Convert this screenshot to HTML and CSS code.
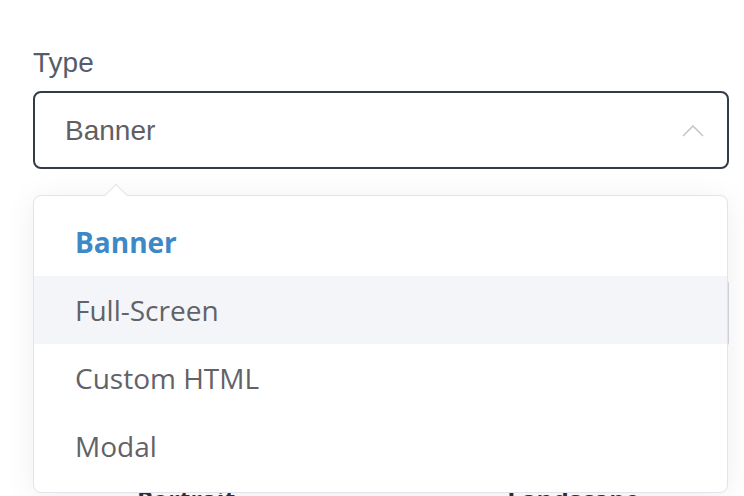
FILE: index.html
```html
<!DOCTYPE html>
<html>
<head>
<meta charset="utf-8">
<link rel="stylesheet" href="styles.css">
</head>
<body>
<div class="page">
  <div class="field">
    <div class="label">Type</div>
    <div class="select">
      <span class="value">Banner</span>
      <svg class="chevron" width="22" height="12" viewBox="0 0 22 12"><polyline points="1,11 11,1 21,11" fill="none" stroke="#c6c6cc" stroke-width="1.6"/></svg>
    </div>
  </div>
  <div class="hidden-field"></div>
  <div class="orient">
    <span class="orient-a">Portrait</span>
    <span class="orient-b">Landscape</span>
  </div>

  <div class="menu">
    <div class="item active">Banner</div>
    <div class="item hover">Full-Screen</div>
    <div class="item">Custom HTML</div>
    <div class="item">Modal</div>
  </div>
</div>
</body>
</html>
```

FILE: styles.css
```css
html, body { margin: 0; padding: 0; background: #fff; }
body { overflow: hidden; width: 744px; height: 496px; }
.page {
  position: relative;
  padding: 46px 15px 0 33px;
  height: 496px;
  box-sizing: border-box;
}
.label {
  font-family: "Liberation Sans", Arial, sans-serif;
  font-size: 28px;
  line-height: 34px;
  color: #555c6a;
  margin-bottom: 11px;
}
.select {
  height: 78px;
  box-sizing: border-box;
  border: 2px solid #343b47;
  border-radius: 8px;
  display: flex;
  align-items: center;
  justify-content: space-between;
  padding: 0 23px 0 30px;
}
.value {
  font-family: "Liberation Sans", Arial, sans-serif;
  font-size: 28px;
  color: #5f5f64;
  margin-top: 1px;
}
.chevron { margin-top: 1px; }
.hidden-field {
  margin-top: 109px;
  height: 70px;
  box-sizing: border-box;
  border: 1px solid #d6d6dc;
  border-radius: 6px;
}
.orient {
  display: flex;
  margin-top: 134px;
  font-family: "Open Sans", sans-serif;
  font-weight: 700;
  font-size: 25px;
  line-height: 34px;
  color: #2c2f36;
}
.orient-a { margin-left: 104px; }
.orient-b { margin-left: 272px; }
.menu {
  position: absolute;
  left: 33px;
  top: 195px;
  width: 695px;
  height: 298px;
  box-sizing: border-box;
  background: #fff;
  border: 1.5px solid #e3e3e9;
  border-radius: 8px;
  box-shadow: 0 4px 32px rgba(20, 20, 40, 0.07);
  padding-top: 12px;
  font-family: "Open Sans", sans-serif;
  font-size: 28px;
  color: #626267;
}
.menu::before {
  content: "";
  position: absolute;
  left: 74px;
  top: -9px;
  width: 15px;
  height: 15px;
  background: #fff;
  border-left: 1.5px solid #e3e3e9;
  border-top: 1.5px solid #e3e3e9;
  transform: rotate(45deg);
}
.item {
  height: 68px;
  display: flex;
  align-items: center;
  padding-left: 41px;
  position: relative;
}
.item.active { color: #3d88c6; font-weight: 700; }
.item.hover { background: #f4f5f9; }
```
